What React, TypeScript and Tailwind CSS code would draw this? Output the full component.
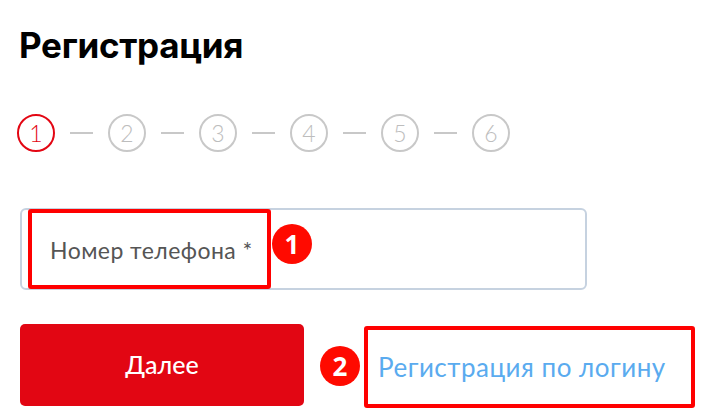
import React from 'react';

const steps = [1, 2, 3, 4, 5, 6];

function Badge({ n }: { n: number }) {
    return (
        <div className="w-[40px] h-[40px] rounded-full bg-[#ff0a00] text-white flex items-center justify-center text-[26px] font-bold leading-none font-['Open_Sans',sans-serif] shrink-0">
            {n}
        </div>
    );
}

export default function App() {
    return (
        <div className="w-[708px] h-[418px] bg-white overflow-hidden pl-[20px] font-['Lato',sans-serif]">
            <h1 className="pt-[22px] -ml-[1px] text-[35px] leading-[46px] font-bold text-black font-['Inter',sans-serif] tracking-[-0.3px]">
                Регистрация
            </h1>

            {/* Steps */}
            <div className="mt-[46px] -ml-[3px] flex items-center gap-[15px]">
                {steps.map((s, i) => (
                    <React.Fragment key={s}>
                        {i > 0 && <div className="w-[23px] h-[2px] bg-[#c8c8c8]" />}
                        <div
                            className={`w-[38px] h-[38px] rounded-full border-2 flex items-center justify-center text-[23px] font-light leading-none ${
                                i === 0 ? 'border-[#e30613] text-[#e30613]' : 'border-[#c8c8c8] text-[#bdbdbd]'
                            }`}
                        >
                            {s}
                        </div>
                    </React.Fragment>
                ))}
            </div>

            {/* Phone input */}
            <div className="relative mt-[56px] w-[567px] h-[82px] border-2 border-[#c6d2e0] rounded-[6px] flex items-center pl-[28px]">
                <span className="mt-[2px] text-[23px] tracking-[0.45px] text-[#555555]">Номер телефона *</span>
                <div className="absolute left-[6px] top-[-1px] w-[243px] h-[80px] border-[4px] border-[#ff0000] rounded-[3px]" />
                <div className="absolute left-[250px] top-[14px]">
                    <Badge n={1} />
                </div>
            </div>

            {/* Actions */}
            <div className="mt-[31px] flex items-center">
                <button className="w-[284px] h-[82px] rounded-[5px] bg-[#e20613] text-white text-[25px] font-medium">
                    Далее
                </button>
                <div className="ml-[16px] mt-[2px]">
                    <Badge n={2} />
                </div>
                <div className="ml-[4px] mt-[5px] w-[331px] h-[82px] border-[4px] border-[#ff0000] rounded-[3px] flex items-center pl-[10px]">
                    <span className="text-[26px] tracking-[0.5px] text-[#5aabef]">Регистрация по логину</span>
                </div>
            </div>
        </div>
    );
}
